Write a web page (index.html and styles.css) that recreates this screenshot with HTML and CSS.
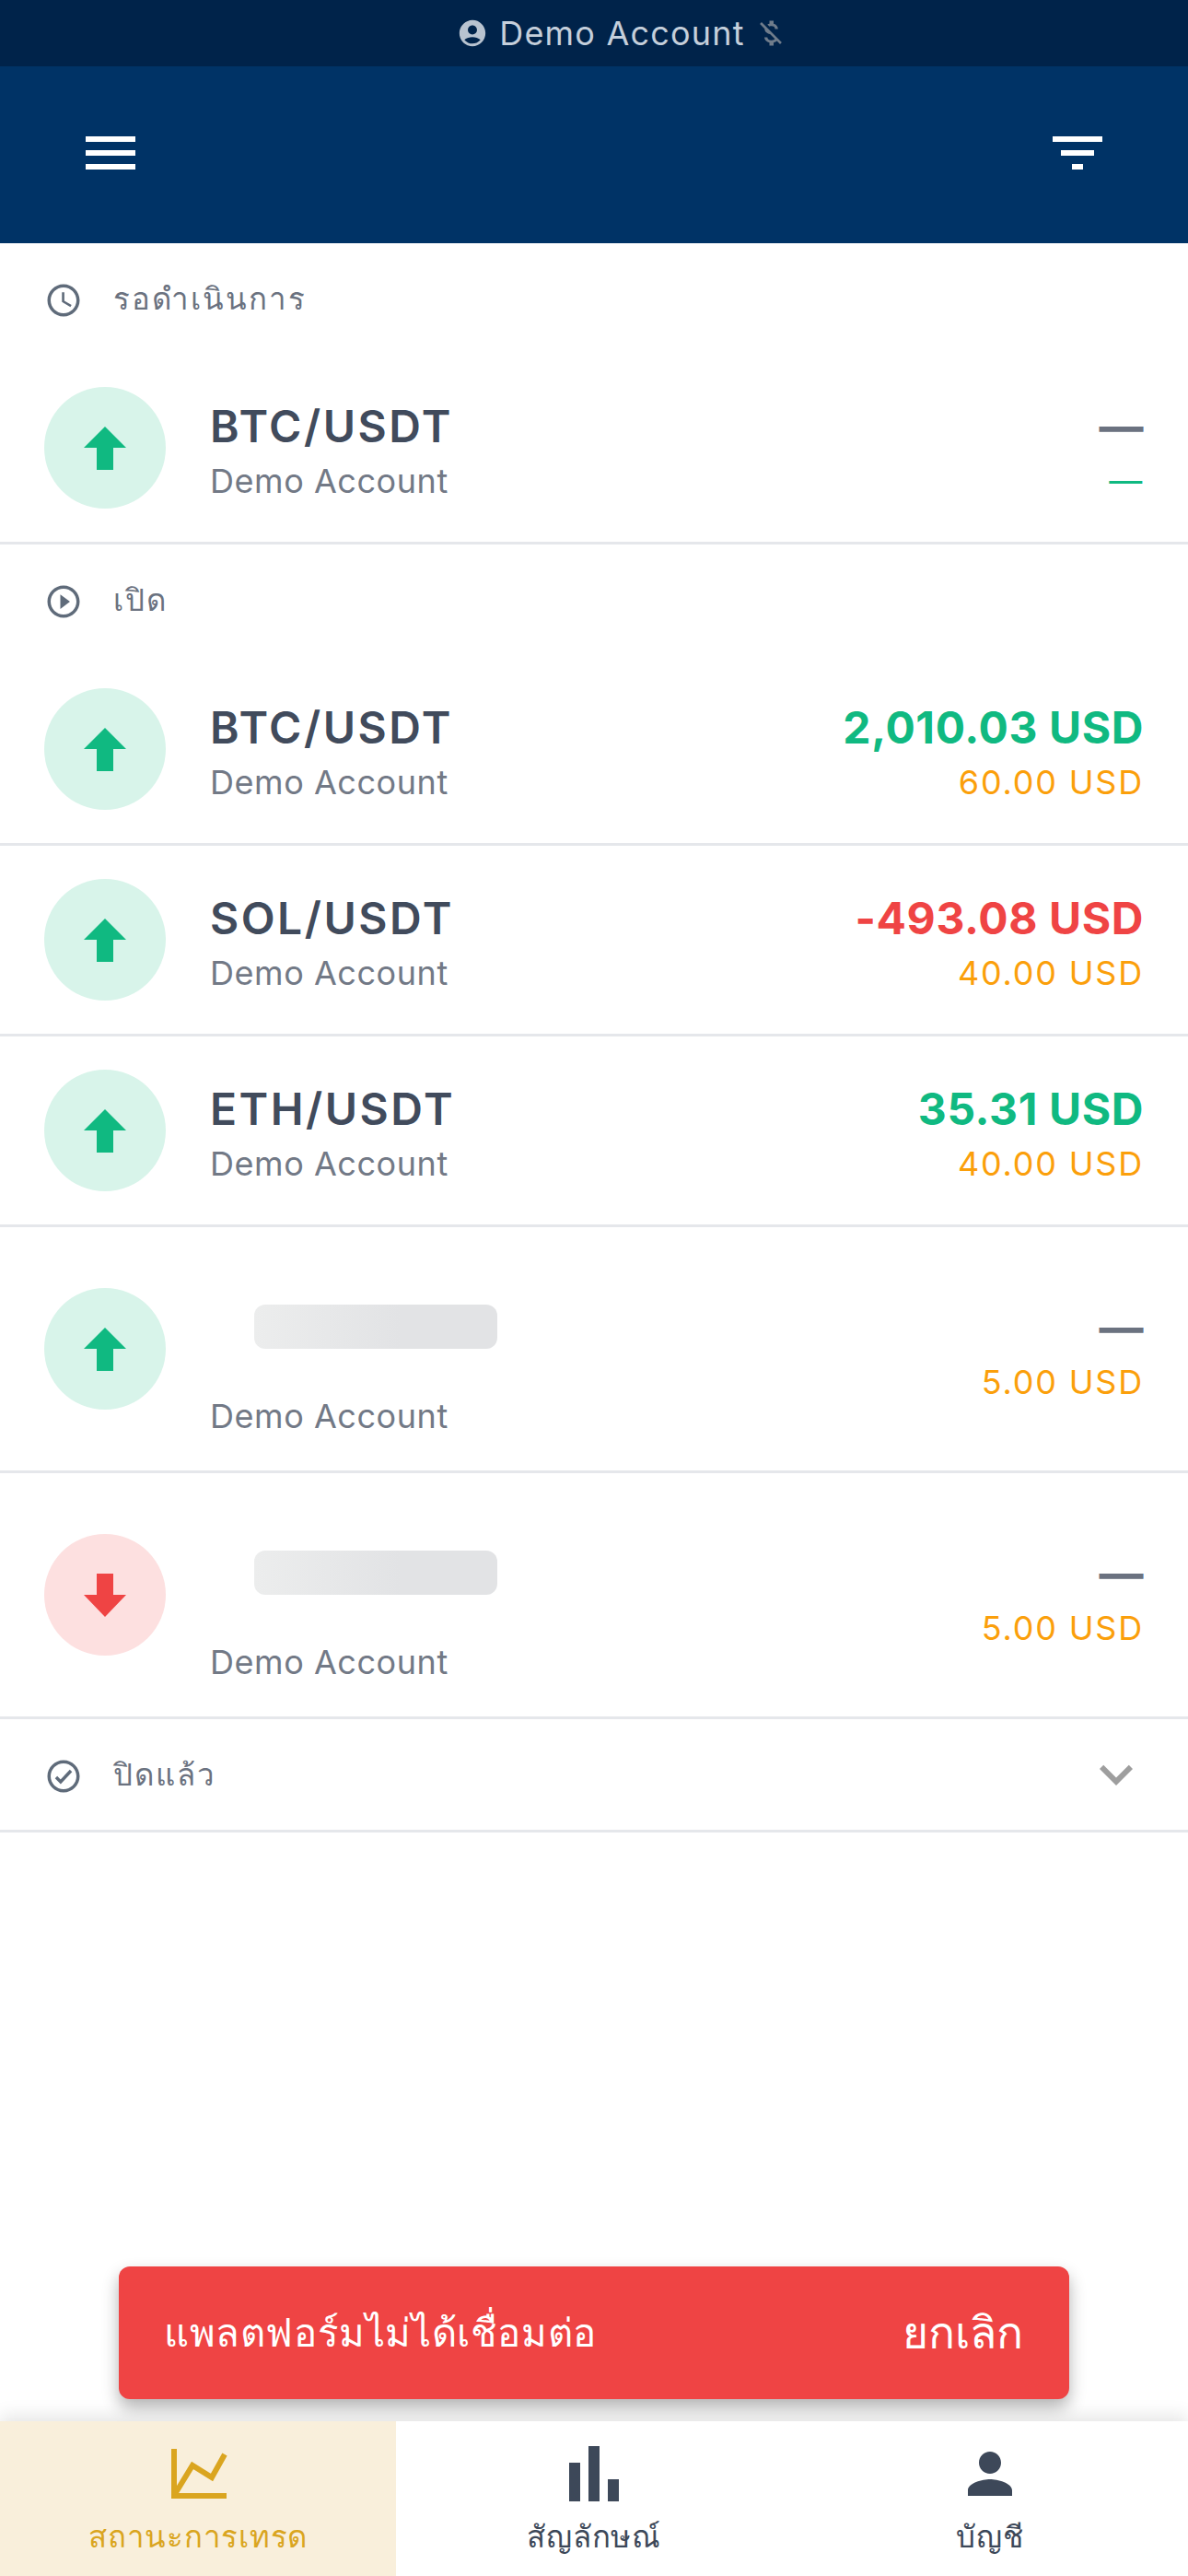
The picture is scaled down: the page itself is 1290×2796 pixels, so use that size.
FILE: index.html
```html
<!DOCTYPE html>
<html lang="th">
<head>
    <meta charset="UTF-8">
    <meta name="viewport" content="width=device-width, initial-scale=1.0">
    <title>สถานะการเทรด</title>
    <link rel="stylesheet" href="styles.css">
</head>
<body>
    <div class="page">
        <!-- Account bar -->
        <div class="account-bar">
            <svg class="account-icon" viewBox="0 0 24 24"><path d="M12 2C6.48 2 2 6.48 2 12s4.48 10 10 10 10-4.48 10-10S17.52 2 12 2zm0 4c1.93 0 3.5 1.57 3.5 3.5S13.93 13 12 13s-3.5-1.57-3.5-3.5S10.07 6 12 6zm0 14c-2.03 0-4.43-.82-6.14-2.88C7.55 15.8 9.68 15 12 15s4.45.8 6.14 2.12C16.43 19.18 14.03 20 12 20z"/></svg>
            <span>Demo Account</span>
            <svg class="money-icon" viewBox="0 0 24 24"><path d="M12.5 6.9c1.78 0 2.44.85 2.5 2.1h2.21c-.07-1.72-1.12-3.3-3.21-3.81V3h-3v2.16c-.53.12-1.03.3-1.48.54l1.47 1.47c.41-.17.91-.27 1.51-.27zM5.33 4.06L4.06 5.33 7.5 8.77c0 2.08 1.56 3.21 3.91 3.91l3.51 3.51c-.34.48-1.05.91-2.42.91-2.06 0-2.87-.92-2.98-2.1h-2.2c.12 2.19 1.76 3.42 3.68 3.83V21h3v-2.15c.96-.18 1.82-.55 2.45-1.12l2.22 2.22 1.27-1.27L5.33 4.06z"/></svg>
        </div>

        <!-- Header -->
        <header class="app-header">
            <svg class="header-icon" viewBox="0 0 24 24"><path d="M3 18h18v-2H3v2zm0-5h18v-2H3v2zm0-7v2h18V6H3z"/></svg>
            <svg class="header-icon" viewBox="0 0 24 24"><path d="M10 18h4v-2h-4v2zM3 6v2h18V6H3zm3 7h12v-2H6v2z"/></svg>
        </header>

        <main class="trades">
            <div class="section-head">
                <svg class="section-icon" viewBox="0 0 24 24"><path d="M11.99 2C6.47 2 2 6.48 2 12s4.47 10 9.99 10C17.52 22 22 17.52 22 12S17.52 2 11.99 2zM12 20c-4.42 0-8-3.58-8-8s3.58-8 8-8 8 3.58 8 8-3.58 8-8 8zm.5-13H11v6l5.25 3.15.75-1.23-4.5-2.67z"/></svg>
                <span class="section-title">รอดำเนินการ</span>
            </div>

            <div class="trade-row">
                <div class="direction up">
                    <svg class="arrow" viewBox="0 0 46 47"><polygon points="23,0 46,23 32,23 32,47 14,47 14,23 0,23"/></svg>
                </div>
                <div class="trade-info">
                    <div class="trade-pair">BTC/USDT</div>
                    <div class="trade-account">Demo Account</div>
                </div>
                <div class="trade-values">
                    <div class="trade-amount muted">—</div>
                    <div class="trade-stake profit">—</div>
                </div>
            </div>

            <div class="section-head">
                <svg class="section-icon" viewBox="0 0 24 24"><path d="M10 16.5l6-4.5-6-4.5v9zM12 2C6.48 2 2 6.48 2 12s4.48 10 10 10 10-4.48 10-10S17.52 2 12 2zm0 18c-4.41 0-8-3.59-8-8s3.59-8 8-8 8 3.59 8 8-3.59 8-8 8z"/></svg>
                <span class="section-title">เปิด</span>
            </div>

            <div class="trade-row">
                <div class="direction up">
                    <svg class="arrow" viewBox="0 0 46 47"><polygon points="23,0 46,23 32,23 32,47 14,47 14,23 0,23"/></svg>
                </div>
                <div class="trade-info">
                    <div class="trade-pair">BTC/USDT</div>
                    <div class="trade-account">Demo Account</div>
                </div>
                <div class="trade-values">
                    <div class="trade-amount profit">2,010.03 USD</div>
                    <div class="trade-stake">60.00 USD</div>
                </div>
            </div>

            <div class="trade-row">
                <div class="direction up">
                    <svg class="arrow" viewBox="0 0 46 47"><polygon points="23,0 46,23 32,23 32,47 14,47 14,23 0,23"/></svg>
                </div>
                <div class="trade-info">
                    <div class="trade-pair">SOL/USDT</div>
                    <div class="trade-account">Demo Account</div>
                </div>
                <div class="trade-values">
                    <div class="trade-amount loss">-493.08 USD</div>
                    <div class="trade-stake">40.00 USD</div>
                </div>
            </div>

            <div class="trade-row">
                <div class="direction up">
                    <svg class="arrow" viewBox="0 0 46 47"><polygon points="23,0 46,23 32,23 32,47 14,47 14,23 0,23"/></svg>
                </div>
                <div class="trade-info">
                    <div class="trade-pair">ETH/USDT</div>
                    <div class="trade-account">Demo Account</div>
                </div>
                <div class="trade-values">
                    <div class="trade-amount profit">35.31 USD</div>
                    <div class="trade-stake">40.00 USD</div>
                </div>
            </div>

            <div class="trade-row">
                <div class="direction up">
                    <svg class="arrow" viewBox="0 0 46 47"><polygon points="23,0 46,23 32,23 32,47 14,47 14,23 0,23"/></svg>
                </div>
                <div class="trade-info">
                    <div class="skeleton"></div>
                    <div class="trade-account">Demo Account</div>
                </div>
                <div class="trade-values">
                    <div class="trade-amount muted">—</div>
                    <div class="trade-stake">5.00 USD</div>
                </div>
            </div>

            <div class="trade-row">
                <div class="direction down">
                    <svg class="arrow" viewBox="0 0 46 47"><polygon points="23,47 46,23 32,23 32,0 14,0 14,23 0,23"/></svg>
                </div>
                <div class="trade-info">
                    <div class="skeleton"></div>
                    <div class="trade-account">Demo Account</div>
                </div>
                <div class="trade-values">
                    <div class="trade-amount muted">—</div>
                    <div class="trade-stake">5.00 USD</div>
                </div>
            </div>

            <div class="section-head closed">
                <svg class="section-icon" viewBox="0 0 24 24"><path d="M12 2C6.48 2 2 6.48 2 12s4.48 10 10 10 10-4.48 10-10S17.52 2 12 2zm0 18c-4.42 0-8-3.58-8-8s3.58-8 8-8 8 3.58 8 8-3.58 8-8 8z"/><path d="M7.4 12.6l2.8 2.8 6.4-6.8" fill="none" stroke="#5f6b7a" stroke-width="2"/></svg>
                <span class="section-title">ปิดแล้ว</span>
                <svg class="chevron" viewBox="0 0 24 24"><path d="M16.59 8.59L12 13.17 7.41 8.59 6 10l6 6 6-6z"/></svg>
            </div>
        </main>

        <!-- Toast sits over the list -->
        <div class="toast">
            <span class="toast-text">แพลตฟอร์มไม่ได้เชื่อมต่อ</span>
            <span class="toast-action">ยกเลิก</span>
        </div>

        <nav class="bottom-nav">
            <div class="nav-item active">
                <svg class="nav-icon" viewBox="0 0 72 72"><path d="M7 9v54h60v-6H13V9z"/><path d="M11 58L30 27l21 13 14-25" fill="none" stroke="currentColor" stroke-width="6"/></svg>
                <span class="nav-label">สถานะการเทรด</span>
            </div>
            <div class="nav-item">
                <svg class="nav-icon" viewBox="0 0 72 72"><path d="M9 24h12v42H9zM30 6h12v60H30zM51 42h12v24H51z"/></svg>
                <span class="nav-label">สัญลักษณ์</span>
            </div>
            <div class="nav-item">
                <svg class="nav-icon" viewBox="0 0 24 24"><path d="M12 12c2.21 0 4-1.79 4-4s-1.79-4-4-4-4 1.79-4 4 1.79 4 4 4zm0 2c-2.67 0-8 1.34-8 4v2h16v-2c0-2.66-5.33-4-8-4z"/></svg>
                <span class="nav-label">บัญชี</span>
            </div>
        </nav>
    </div>
</body>
</html>
```

FILE: styles.css
```css
* {
    box-sizing: border-box;
}

body {
    margin: 0;
    background-color: #fff;
    font-family: Inter, "Noto Sans", "DejaVu Sans", sans-serif;
    color: #414b5c;
}

.page {
    position: relative;
    display: flex;
    flex-direction: column;
    height: 2796px;
    overflow: hidden;
}

.account-bar {
    display: flex;
    align-items: center;
    justify-content: center;
    height: 72px;
    padding-left: 61px;
    background-color: #00234a;
    color: #c5cfdb;
    font-size: 36px;
    letter-spacing: 1.2px;
}

.account-icon {
    width: 34px;
    height: 34px;
    margin-right: 12px;
    fill: #b8c3d0;
}

.money-icon {
    width: 36px;
    height: 36px;
    margin-left: 10px;
    fill: #6f7c8b;
}

.app-header {
    display: flex;
    align-items: center;
    justify-content: space-between;
    height: 192px;
    padding: 0 84px 4px;
    background-color: #003366;
}

.header-icon {
    width: 72px;
    height: 72px;
    fill: #fff;
}

.trades {
    flex: 1;
}

.section-head {
    display: flex;
    align-items: center;
    height: 120px;
    padding: 0 42px 0 48px;
}

.section-head.closed {
    height: 123px;
    border-bottom: 3px solid #e5e7eb;
}

.section-icon {
    width: 42px;
    height: 42px;
    margin: 4px 33px 0 0;
    fill: #5f6b7a;
}

.section-title {
    flex: 1;
    font-size: 33px;
    letter-spacing: 2px;
    color: #6b7280;
}

.chevron {
    width: 72px;
    height: 72px;
    fill: #9e9e9e;
}

.trade-row {
    display: flex;
    align-items: center;
    padding: 36px 48px;
    border-bottom: 3px solid #e5e7eb;
}

.direction {
    display: flex;
    align-items: center;
    justify-content: center;
    flex-shrink: 0;
    width: 132px;
    height: 132px;
    margin-right: 48px;
    border-radius: 50%;
}

.direction.up {
    background-color: #d8f4ea;
    fill: #10b981;
}

.direction.down {
    background-color: #fde0e0;
    fill: #ef4444;
}

.arrow {
    width: 46px;
    height: 47px;
}

.trade-info {
    flex: 1;
}

.trade-pair,
.trade-amount {
    font-size: 48px;
    font-weight: 600;
    line-height: 72px;
    letter-spacing: 2.5px;
}

.trade-account,
.trade-stake {
    font-size: 36px;
    line-height: 46px;
    letter-spacing: 1.8px;
    color: #727986;
}

.trade-account {
    letter-spacing: 0.55px;
}

.skeleton {
    width: 264px;
    height: 48px;
    margin: 48px 0 50px 48px;
    border-radius: 12px;
    background: linear-gradient(90deg, #eceded, #e2e3e5 60%);
}

.trade-values {
    text-align: right;
}

.trade-amount {
    font-weight: 700;
    letter-spacing: 0.6px;
}

.trade-stake {
    color: #fb9f0b;
}

.muted {
    color: #6b7280;
}

.trade-amount.profit,
.trade-stake.profit {
    color: #10b981;
}

.trade-amount.loss {
    color: #ef4444;
}

.toast {
    position: absolute;
    left: 129px;
    top: 2460px;
    display: flex;
    align-items: center;
    justify-content: space-between;
    width: 1032px;
    height: 144px;
    padding: 0 50px 0 49px;
    border-radius: 12px;
    background-color: #ef4444;
    color: #fff;
    box-shadow: 0 9px 18px rgba(0, 0, 0, 0.3);
}

.toast-text {
    font-size: 42px;
    letter-spacing: 0.6px;
}

.toast-action {
    font-size: 48px;
}

.bottom-nav {
    display: flex;
    height: 168px;
    background-color: #fff;
    box-shadow: 0 -6px 18px rgba(0, 0, 0, 0.1);
    z-index: 1;
}

.nav-item {
    display: flex;
    flex: 1;
    flex-direction: column;
    align-items: center;
    padding-top: 21px;
    color: #3d4859;
}

.nav-item.active {
    background-color: #f9efdb;
    color: #daa520;
}

.nav-icon {
    width: 72px;
    height: 72px;
    fill: currentColor;
}

.nav-label {
    margin-top: 8px;
    font-size: 33px;
    line-height: 48px;
    letter-spacing: 0.75px;
}
```
